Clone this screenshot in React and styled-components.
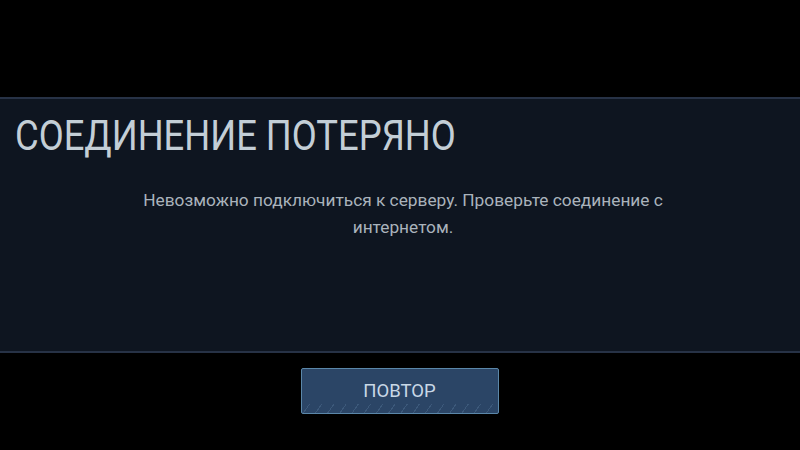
import React from 'react';
import styled, { createGlobalStyle } from 'styled-components';

const GlobalStyle = createGlobalStyle`
  html, body {
    margin: 0;
    padding: 0;
    background: #000;
  }
  body {
    font-family: Roboto, "Noto Sans", sans-serif;
  }
`;

const Screen = styled.div`
  width: 800px;
  height: 450px;
  background: #000;
  display: flex;
  flex-direction: column;
  overflow: hidden;
`;

const Panel = styled.div`
  margin-top: 97px;
  height: 252px;
  background: #0e1520;
  border-top: 2px solid #273246;
  border-bottom: 2px solid #273246;
  display: flex;
  flex-direction: column;
`;

const Title = styled.h1`
  margin: 0;
  padding: 12px 0 0 15px;
  font-size: 42px;
  font-weight: 400;
  line-height: 50px;
  color: #c3ced6;
  white-space: nowrap;

  span {
    display: inline-block;
    transform: scaleX(0.866);
    transform-origin: left center;
  }
`;

const Message = styled.p`
  margin: 26px auto 0;
  width: 570px;
  padding-left: 6px;
  text-align: center;
  font-size: 17.3px;
  line-height: 27px;
  color: #aab3bc;
`;

const Footer = styled.div`
  display: flex;
  justify-content: center;
  padding-top: 15px;
`;

const Button = styled.div`
  width: 198px;
  height: 46px;
  margin-left: -1px;
  box-sizing: border-box;
  border: 1px solid #5b87a9;
  border-radius: 2px;
  background:
    repeating-linear-gradient(
      -55deg,
      rgba(255, 255, 255, 0) 0 9px,
      rgba(140, 180, 215, 0.18) 9px 10px
    ) bottom / 100% 9px no-repeat,
    #2b4566;
  color: #c9d8e6;
  font-size: 18.5px;
  display: flex;
  align-items: center;
  justify-content: center;
  cursor: pointer;
`;

export default function App() {
  return (
    <Screen>
      <GlobalStyle />
      <Panel>
        <Title><span>СОЕДИНЕНИЕ ПОТЕРЯНО</span></Title>
        <Message>
          Невозможно подключиться к серверу. Проверьте соединение с интернетом.
        </Message>
      </Panel>
      <Footer>
        <Button>ПОВТОР</Button>
      </Footer>
    </Screen>
  );
}
